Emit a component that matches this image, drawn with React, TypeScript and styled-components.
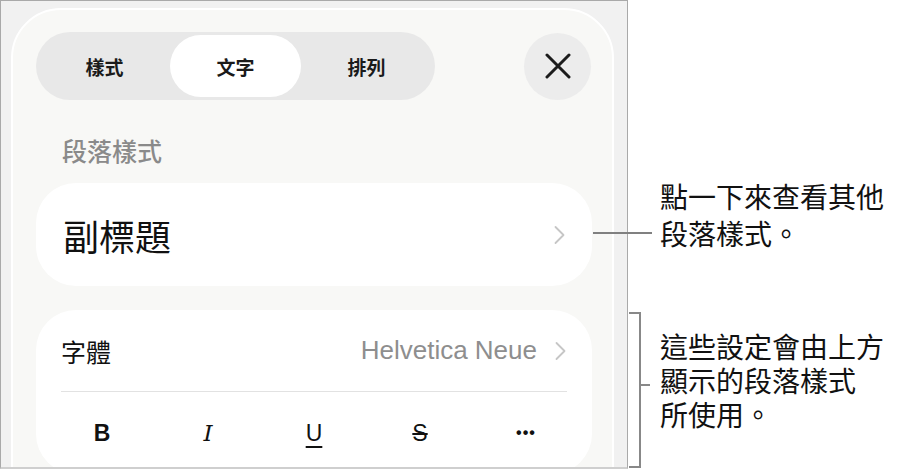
import React from "react";
import styled, { createGlobalStyle } from "styled-components";

const GlobalStyle = createGlobalStyle`
  html, body { margin: 0; padding: 0; background: #ffffff; }
  body {
    width: 904px;
    height: 471px;
    overflow: hidden;
    font-family: "Noto Sans CJK TC", "Noto Sans", sans-serif;
    color: #111;
  }
`;

const CJK = `"Noto Sans CJK TC", "Noto Sans", sans-serif`;

const Page = styled.div`
  display: flex;
  align-items: flex-start;
  width: 904px;
  height: 471px;
`;

/* screenshot of the format sheet */
const Shot = styled.div`
  flex: none;
  width: 628px;
  height: 469px;
  box-sizing: border-box;
  border: 1px solid #a9a9a9;
  border-bottom: 2px solid #cfcfcf;
  background: #f1f1f1;
  overflow: hidden;
  padding: 7px 0 0 10px;
`;

const Sheet = styled.div`
  width: 603px;
  height: 540px;
  box-sizing: border-box;
  background: #f8f8f6;
  border: 2px solid #ffffff;
  border-radius: 50px;
  padding: 22px 20px 0 23px;
  display: flex;
  flex-direction: column;
`;

const Header = styled.div`
  display: flex;
  align-items: center;
  justify-content: space-between;
`;

const Segmented = styled.div`
  width: 399px;
  height: 68px;
  box-sizing: border-box;
  padding: 3px;
  border-radius: 34px;
  background: #e8e8e8;
  display: grid;
  grid-template-columns: repeat(3, 1fr);
`;

const Segment = styled.div<{ $active?: boolean }>`
  display: flex;
  align-items: center;
  justify-content: center;
  border-radius: 31px;
  background: ${(p) => (p.$active ? "#ffffff" : "transparent")};
  font-family: ${CJK};
  font-size: 19px;
  font-weight: 600;
  color: #1a1a1a;
`;

const CloseButton = styled.div`
  width: 67px;
  height: 67px;
  margin-right: 1px;
  border-radius: 50%;
  background: #ececec;
  display: flex;
  align-items: center;
  justify-content: center;
`;

const SectionTitle = styled.div`
  margin: 35px 0 0 26px;
  font-family: ${CJK};
  font-size: 25px;
  line-height: 30px;
  font-weight: 500;
  color: #8a8a8a;
`;

const Card = styled.div<{ $gap: number }>`
  margin-top: ${(p) => p.$gap}px;
  background: #ffffff;
  border-radius: 40px;
`;

const StyleRow = styled.div`
  height: 103px;
  box-sizing: border-box;
  padding: 0 26px 0 27px;
  display: flex;
  align-items: center;
  justify-content: space-between;
`;

const StyleName = styled.span`
  font-family: ${CJK};
  font-size: 36px;
  font-weight: 400;
  color: #111;
`;

const FormatBody = styled.div`
  padding: 0 25px 0 25px;
  display: flex;
  flex-direction: column;
`;

const FontRow = styled.div`
  height: 81px;
  display: flex;
  align-items: center;
  justify-content: space-between;
`;

const FontLabel = styled.span`
  font-family: ${CJK};
  font-size: 25px;
  color: #111;
`;

const FontValue = styled.span`
  display: flex;
  align-items: center;
  gap: 17px;
  font-family: "Liberation Sans", Arial, sans-serif;
  font-size: 26px;
  color: #8e8e8e;
`;

const Divider = styled.div`
  height: 1px;
  background: #e2e2e2;
`;

const ToolRow = styled.div`
  margin: 0 -12px;
  height: 82px;
  display: grid;
  grid-template-columns: repeat(5, 1fr);
  align-items: center;
  justify-items: center;
`;

const Tool = styled.span<{ $kind: "b" | "i" | "u" | "s" | "more" }>`
  font-size: ${(p) => (p.$kind === "more" ? "16px" : "23px")};
  line-height: 1;
  color: #111;
  font-family: ${(p) =>
    p.$kind === "i" ? `"DejaVu Serif", "Liberation Serif", serif` : `"Liberation Sans", Arial, sans-serif`};
  font-weight: ${(p) => (p.$kind === "b" || p.$kind === "more" ? 700 : 400)};
  font-style: ${(p) => (p.$kind === "i" ? "italic" : "normal")};
  text-decoration: ${(p) =>
    p.$kind === "u" ? "underline" : p.$kind === "s" ? "line-through" : "none"};
  text-underline-offset: 5px;
  text-decoration-thickness: 1.5px;
  letter-spacing: ${(p) => (p.$kind === "more" ? "1px" : "0")};
`;

/* annotations on the right */
const Notes = styled.div`
  flex: 1;
  display: flex;
  flex-direction: column;
`;

const Note = styled.div`
  font-family: ${CJK};
  font-size: 28px;
  line-height: 37px;
  color: #111;
  white-space: pre-line;
`;

const LeaderNote = styled.div`
  position: relative;
  margin-top: 178px;
  padding-left: 32px;
  &::before {
    content: "";
    position: absolute;
    left: -35px;
    top: 54px;
    width: 59px;
    height: 2px;
    background: #808080;
  }
`;

const BracketNote = styled.div`
  margin-top: 60px;
  display: flex;
  align-items: flex-start;
`;

const Bracket = styled.div`
  position: relative;
  flex: none;
  margin-left: 1px;
  width: 10px;
  height: 152px;
  border: 2px solid #888888;
  border-left: none;
  &::after {
    content: "";
    position: absolute;
    left: 100%;
    top: 70px;
    width: 11px;
    height: 2px;
    background: #888888;
  }
`;

const BracketText = styled(Note)`
  margin: 17px 0 0 19px;
  line-height: 34px;
`;

const Chevron = ({ color }: { color: string }) => (
  <svg width="13" height="20" viewBox="0 0 13 20" fill="none">
    <path d="M2.5 2 L10.5 10 L2.5 18" stroke={color} strokeWidth="1.8" strokeLinecap="round" strokeLinejoin="round" />
  </svg>
);

const CloseIcon = () => (
  <svg width="26" height="26" viewBox="0 0 26 26" fill="none">
    <path d="M2 2 L24 24 M24 2 L2 24" stroke="#1c1c1c" strokeWidth="3" strokeLinecap="round" />
  </svg>
);

export default function App() {
  return (
    <>
      <GlobalStyle />
      <Page>
        <Shot>
          <Sheet>
            <Header>
              <Segmented>
                <Segment>樣式</Segment>
                <Segment $active>文字</Segment>
                <Segment>排列</Segment>
              </Segmented>
              <CloseButton>
                <CloseIcon />
              </CloseButton>
            </Header>
            <SectionTitle>段落樣式</SectionTitle>
            <Card $gap={18}>
              <StyleRow>
                <StyleName>副標題</StyleName>
                <Chevron color="#c6c6c6" />
              </StyleRow>
            </Card>
            <Card $gap={24}>
              <FormatBody>
                <FontRow>
                  <FontLabel>字體</FontLabel>
                  <FontValue>
                    Helvetica Neue
                    <Chevron color="#c6c6c6" />
                  </FontValue>
                </FontRow>
                <Divider />
                <ToolRow>
                  <Tool $kind="b">B</Tool>
                  <Tool $kind="i">I</Tool>
                  <Tool $kind="u">U</Tool>
                  <Tool $kind="s">S</Tool>
                  <Tool $kind="more">•••</Tool>
                </ToolRow>
              </FormatBody>
            </Card>
          </Sheet>
        </Shot>
        <Notes>
          <LeaderNote>
            <Note>{"點一下來查看其他\n段落樣式。"}</Note>
          </LeaderNote>
          <BracketNote>
            <Bracket />
            <BracketText>{"這些設定會由上方\n顯示的段落樣式\n所使用。"}</BracketText>
          </BracketNote>
        </Notes>
      </Page>
    </>
  );
}
